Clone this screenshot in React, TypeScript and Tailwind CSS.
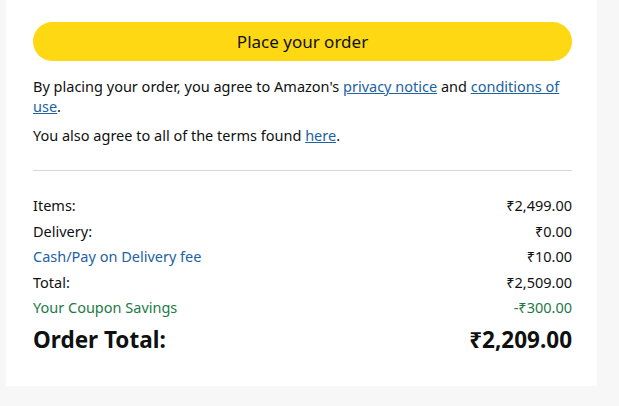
import React from 'react';

const rows = [
  { label: 'Items:', value: '₹2,499.00', tone: 'text-[#0f1111]' },
  { label: 'Delivery:', value: '₹0.00', tone: 'text-[#0f1111]' },
  { label: 'Cash/Pay on Delivery fee', value: '₹10.00', tone: 'text-[#2162a1]', valueTone: 'text-[#0f1111]' },
  { label: 'Total:', value: '₹2,509.00', tone: 'text-[#0f1111]' },
  { label: 'Your Coupon Savings', value: '-₹300.00', tone: 'text-[#1d7a47]' },
];

const App: React.FC = () => {
  return (
    <div className="w-[619px] h-[406px] bg-[#f7f7f7] pl-[6px] pr-[22px] font-['Noto_Sans',sans-serif] text-[#0f1111]">
      <div className="bg-white h-[386px] pt-[22px] pl-[27px] pr-[25px]">
        <button className="w-full h-[39px] rounded-full bg-[#ffd814] text-[17px] text-[#0f1111] leading-none">
          Place your order
        </button>

        <p className="mt-[15px] text-[14.5px] leading-[20px]">
          By placing your order, you agree to Amazon's{' '}
          <a className="text-[#2162a1] underline">privacy notice</a> and{' '}
          <a className="text-[#2162a1] underline">conditions of use</a>.
        </p>
        <p className="mt-[9px] text-[14.5px] leading-[20px]">
          You also agree to all of the terms found{' '}
          <a className="text-[#2162a1] underline">here</a>.
        </p>

        <div className="mt-[25px] border-t border-[#d5d9d9]" />

        <div className="mt-[22px] flex flex-col">
          {rows.map((r) => (
            <div key={r.label} className="flex justify-between text-[14.5px] leading-[25.5px]">
              <span className={r.tone}>{r.label}</span>
              <span className={r.valueTone ?? r.tone}>{r.value}</span>
            </div>
          ))}
          <div className="mt-[4px] flex justify-between text-[22.5px] font-bold leading-[30px]">
            <span>Order Total:</span>
            <span>₹2,209.00</span>
          </div>
        </div>
      </div>
    </div>
  );
};

export default App;
